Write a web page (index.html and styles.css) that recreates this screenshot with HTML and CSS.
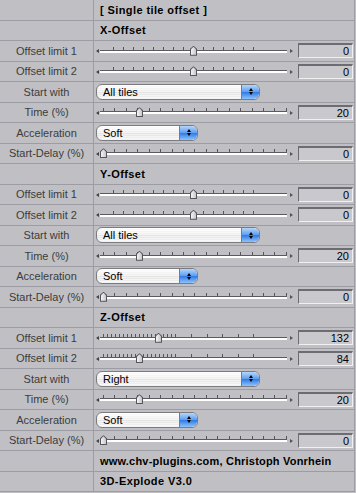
FILE: index.html
```html
<!DOCTYPE html>
<html lang="en">
<head>
  <meta charset="UTF-8" />
  <title>3D-Explode</title>
  <link rel="stylesheet" href="styles.css">
</head>
<body>

<div class="panel">
  <div class="row head"><div class="label"></div><div class="cell"><span class="title">[ Single tile offset ]</span></div></div>

  <!-- X -->
  <div class="row head"><div class="label"></div><div class="cell"><span class="title">X-Offset</span></div></div>
  <div class="row"><div class="label">Offset limit 1</div><div class="cell">
    <div class="slider"><span class="arr-l"></span><div class="track ticks-offset"><span class="thumb" style="left: 90px"></span></div><span class="arr-r"></span></div>
    <div class="value">0</div></div></div>
  <div class="row"><div class="label">Offset limit 2</div><div class="cell">
    <div class="slider"><span class="arr-l"></span><div class="track ticks-offset"><span class="thumb" style="left: 90px"></span></div><span class="arr-r"></span></div>
    <div class="value">0</div></div></div>
  <div class="row"><div class="label">Start with</div><div class="cell">
    <div class="popup wide"><span>All tiles</span><span class="popup-btn"><i class="up"></i><i class="down"></i></span></div></div></div>
  <div class="row"><div class="label">Time (%)</div><div class="cell">
    <div class="slider"><span class="arr-l"></span><div class="track ticks-pct"><span class="thumb" style="left: 36px"></span></div><span class="arr-r"></span></div>
    <div class="value">20</div></div></div>
  <div class="row"><div class="label">Acceleration</div><div class="cell">
    <div class="popup"><span>Soft</span><span class="popup-btn"><i class="up"></i><i class="down"></i></span></div></div></div>
  <div class="row"><div class="label">Start-Delay (%)</div><div class="cell">
    <div class="slider"><span class="arr-l"></span><div class="track ticks-pct"><span class="thumb" style="left: 0px"></span></div><span class="arr-r"></span></div>
    <div class="value">0</div></div></div>

  <!-- Y -->
  <div class="row head"><div class="label"></div><div class="cell"><span class="title">Y-Offset</span></div></div>
  <div class="row"><div class="label">Offset limit 1</div><div class="cell">
    <div class="slider"><span class="arr-l"></span><div class="track ticks-offset"><span class="thumb" style="left: 90px"></span></div><span class="arr-r"></span></div>
    <div class="value">0</div></div></div>
  <div class="row"><div class="label">Offset limit 2</div><div class="cell">
    <div class="slider"><span class="arr-l"></span><div class="track ticks-offset"><span class="thumb" style="left: 90px"></span></div><span class="arr-r"></span></div>
    <div class="value">0</div></div></div>
  <div class="row"><div class="label">Start with</div><div class="cell">
    <div class="popup wide"><span>All tiles</span><span class="popup-btn"><i class="up"></i><i class="down"></i></span></div></div></div>
  <div class="row"><div class="label">Time (%)</div><div class="cell">
    <div class="slider"><span class="arr-l"></span><div class="track ticks-pct"><span class="thumb" style="left: 36px"></span></div><span class="arr-r"></span></div>
    <div class="value">20</div></div></div>
  <div class="row"><div class="label">Acceleration</div><div class="cell">
    <div class="popup"><span>Soft</span><span class="popup-btn"><i class="up"></i><i class="down"></i></span></div></div></div>
  <div class="row"><div class="label">Start-Delay (%)</div><div class="cell">
    <div class="slider"><span class="arr-l"></span><div class="track ticks-pct"><span class="thumb" style="left: 0px"></span></div><span class="arr-r"></span></div>
    <div class="value">0</div></div></div>

  <!-- Z -->
  <div class="row head"><div class="label"></div><div class="cell"><span class="title">Z-Offset</span></div></div>
  <div class="row"><div class="label">Offset limit 1</div><div class="cell">
    <div class="slider"><span class="arr-l"></span><div class="track ticks-z"><span class="thumb" style="left: 55px"></span></div><span class="arr-r"></span></div>
    <div class="value">132</div></div></div>
  <div class="row"><div class="label">Offset limit 2</div><div class="cell">
    <div class="slider"><span class="arr-l"></span><div class="track ticks-z"><span class="thumb" style="left: 36px"></span></div><span class="arr-r"></span></div>
    <div class="value">84</div></div></div>
  <div class="row"><div class="label">Start with</div><div class="cell">
    <div class="popup wide"><span>Right</span><span class="popup-btn"><i class="up"></i><i class="down"></i></span></div></div></div>
  <div class="row"><div class="label">Time (%)</div><div class="cell">
    <div class="slider"><span class="arr-l"></span><div class="track ticks-pct"><span class="thumb" style="left: 36px"></span></div><span class="arr-r"></span></div>
    <div class="value">20</div></div></div>
  <div class="row"><div class="label">Acceleration</div><div class="cell">
    <div class="popup"><span>Soft</span><span class="popup-btn"><i class="up"></i><i class="down"></i></span></div></div></div>
  <div class="row"><div class="label">Start-Delay (%)</div><div class="cell">
    <div class="slider"><span class="arr-l"></span><div class="track ticks-pct"><span class="thumb" style="left: 0px"></span></div><span class="arr-r"></span></div>
    <div class="value">0</div></div></div>

  <div class="row head"><div class="label"></div><div class="cell"><span class="title url">www.chv-plugins.com, Christoph Vonrhein</span></div></div>
  <div class="row head"><div class="label"></div><div class="cell"><span class="title">3D-Explode V3.0</span></div></div>
</div>

</body>
</html>
```

FILE: styles.css
```css
body {
  margin: 0;
  background: #c0c0c4;
  font-family: "Liberation Sans", Arial, sans-serif;
}

.panel {
  width: 355px;
  border-right: 1px solid #9c9ca4;
  box-sizing: border-box;
}

.row {
  display: flex;
  height: 20.5px;
  box-sizing: border-box;
  border-bottom: 1px solid #9c9ca4;
}

.label {
  width: 93px;
  flex: none;
  border-right: 1px solid #9c9ca4;
  display: flex;
  align-items: center;
  justify-content: center;
  font-size: 11px;
  color: #3c3c3c;
}

.cell {
  flex: 1;
  display: flex;
  align-items: center;
  padding-left: 2px;
}

.title {
  padding-left: 4px;
  font-weight: bold;
  font-size: 11px;
  letter-spacing: 0.4px;
  color: #000;
}

.title.url {
  letter-spacing: 0.2px;
}

/* slider */
.slider {
  width: 197px;
  height: 12px;
  display: flex;
  align-items: center;
}

.arr-l {
  width: 0;
  height: 0;
  border-top: 2.5px solid transparent;
  border-bottom: 2.5px solid transparent;
  border-right: 3px solid #444;
  margin-top: 1px;
}

.arr-r {
  width: 0;
  height: 0;
  border-top: 2.5px solid transparent;
  border-bottom: 2.5px solid transparent;
  border-left: 3px solid #555;
  margin-top: 1px;
}

.track {
  flex: 1;
  height: 12px;
  position: relative;
  margin: 0 3px 0 1px;
}

.track::before {
  content: "";
  position: absolute;
  top: 2px;
  left: 3px;
  right: 0;
  height: 3px;
}

.track::after {
  content: "";
  position: absolute;
  left: 0;
  right: 0;
  top: 5px;
  height: 2px;
  border-top: 1px solid #5a5a60;
  background: #fff;
}

.ticks-offset::before {
  left: 13px;
  width: 146px;
  background: repeating-linear-gradient(to right, #55555a 0 1px, transparent 1px 10px);
}

.ticks-pct::before {
  background:
    repeating-linear-gradient(to right, #55555a 0 1px, transparent 1px 45.7px) 0 -2px / 100% 5px no-repeat,
    repeating-linear-gradient(to right, #55555a 0 1px, transparent 1px 11.43px);
  top: 2px;
}

.ticks-z::before {
  left: 3px;
  width: 152px;
  background:
    repeating-linear-gradient(to right, #55555a 0 1px, transparent 1px 4px) 0 0 / 76px 3px no-repeat,
    repeating-linear-gradient(to right, #55555a 0 1px, transparent 1px 15.6px) 88px 0 / 64px 3px no-repeat;
}

.thumb {
  position: absolute;
  top: 1px;
  width: 7px;
  height: 10px;
  z-index: 1;
  background: #55555a;
  clip-path: polygon(50% 0, 100% 30%, 100% 100%, 0 100%, 0 30%);
}

.thumb::after {
  content: "";
  position: absolute;
  left: 1px;
  top: 1px;
  right: 1px;
  bottom: 1px;
  background: linear-gradient(to right, #f4f4f4, #c8c8cc);
  clip-path: polygon(50% 0, 100% 30%, 100% 100%, 0 100%, 0 30%);
}

/* number field */
.value {
  margin-left: 5px;
  width: 55px;
  height: 15px;
  box-sizing: border-box;
  border-top: 2px solid #6c6c72;
  border-left: 1px solid #6c6c72;
  border-bottom: 1px solid #f0f0f0;
  border-right: 1px solid #f0f0f0;
  background: #c9c9cd;
  font-size: 11px;
  line-height: 12px;
  text-align: right;
  padding-right: 3px;
  color: #000;
}

/* aqua popup */
.popup {
  width: 102px;
  height: 16px;
  box-sizing: border-box;
  border: 1px solid #7c7c80;
  border-radius: 6px;
  display: flex;
  align-items: center;
  justify-content: space-between;
  overflow: hidden;
  background:
    repeating-linear-gradient(to bottom, rgba(255,255,255,0.5) 0 1px, transparent 1px 2px),
    linear-gradient(to bottom, #fdfdfd, #ececec 50%, #e2e2e2 51%, #f4f4f4);
  font-size: 11px;
  color: #000;
}

.popup.wide {
  width: 164px;
}

.popup > span:first-child {
  padding-left: 6px;
}

.popup-btn {
  width: 17px;
  height: 100%;
  border-left: 1px solid #5a80b8;
  border-radius: 0 5px 5px 0;
  background: linear-gradient(to bottom, #b3d6fb, #5c9cf0 50%, #2f78e6 51%, #8cc4fc);
  display: flex;
  flex-direction: column;
  align-items: center;
  justify-content: center;
  gap: 1px;
}

.popup-btn i {
  width: 0;
  height: 0;
  border-left: 2.5px solid transparent;
  border-right: 2.5px solid transparent;
}

.popup-btn .up {
  border-bottom: 3px solid #000;
}

.popup-btn .down {
  border-top: 3px solid #000;
}
```
